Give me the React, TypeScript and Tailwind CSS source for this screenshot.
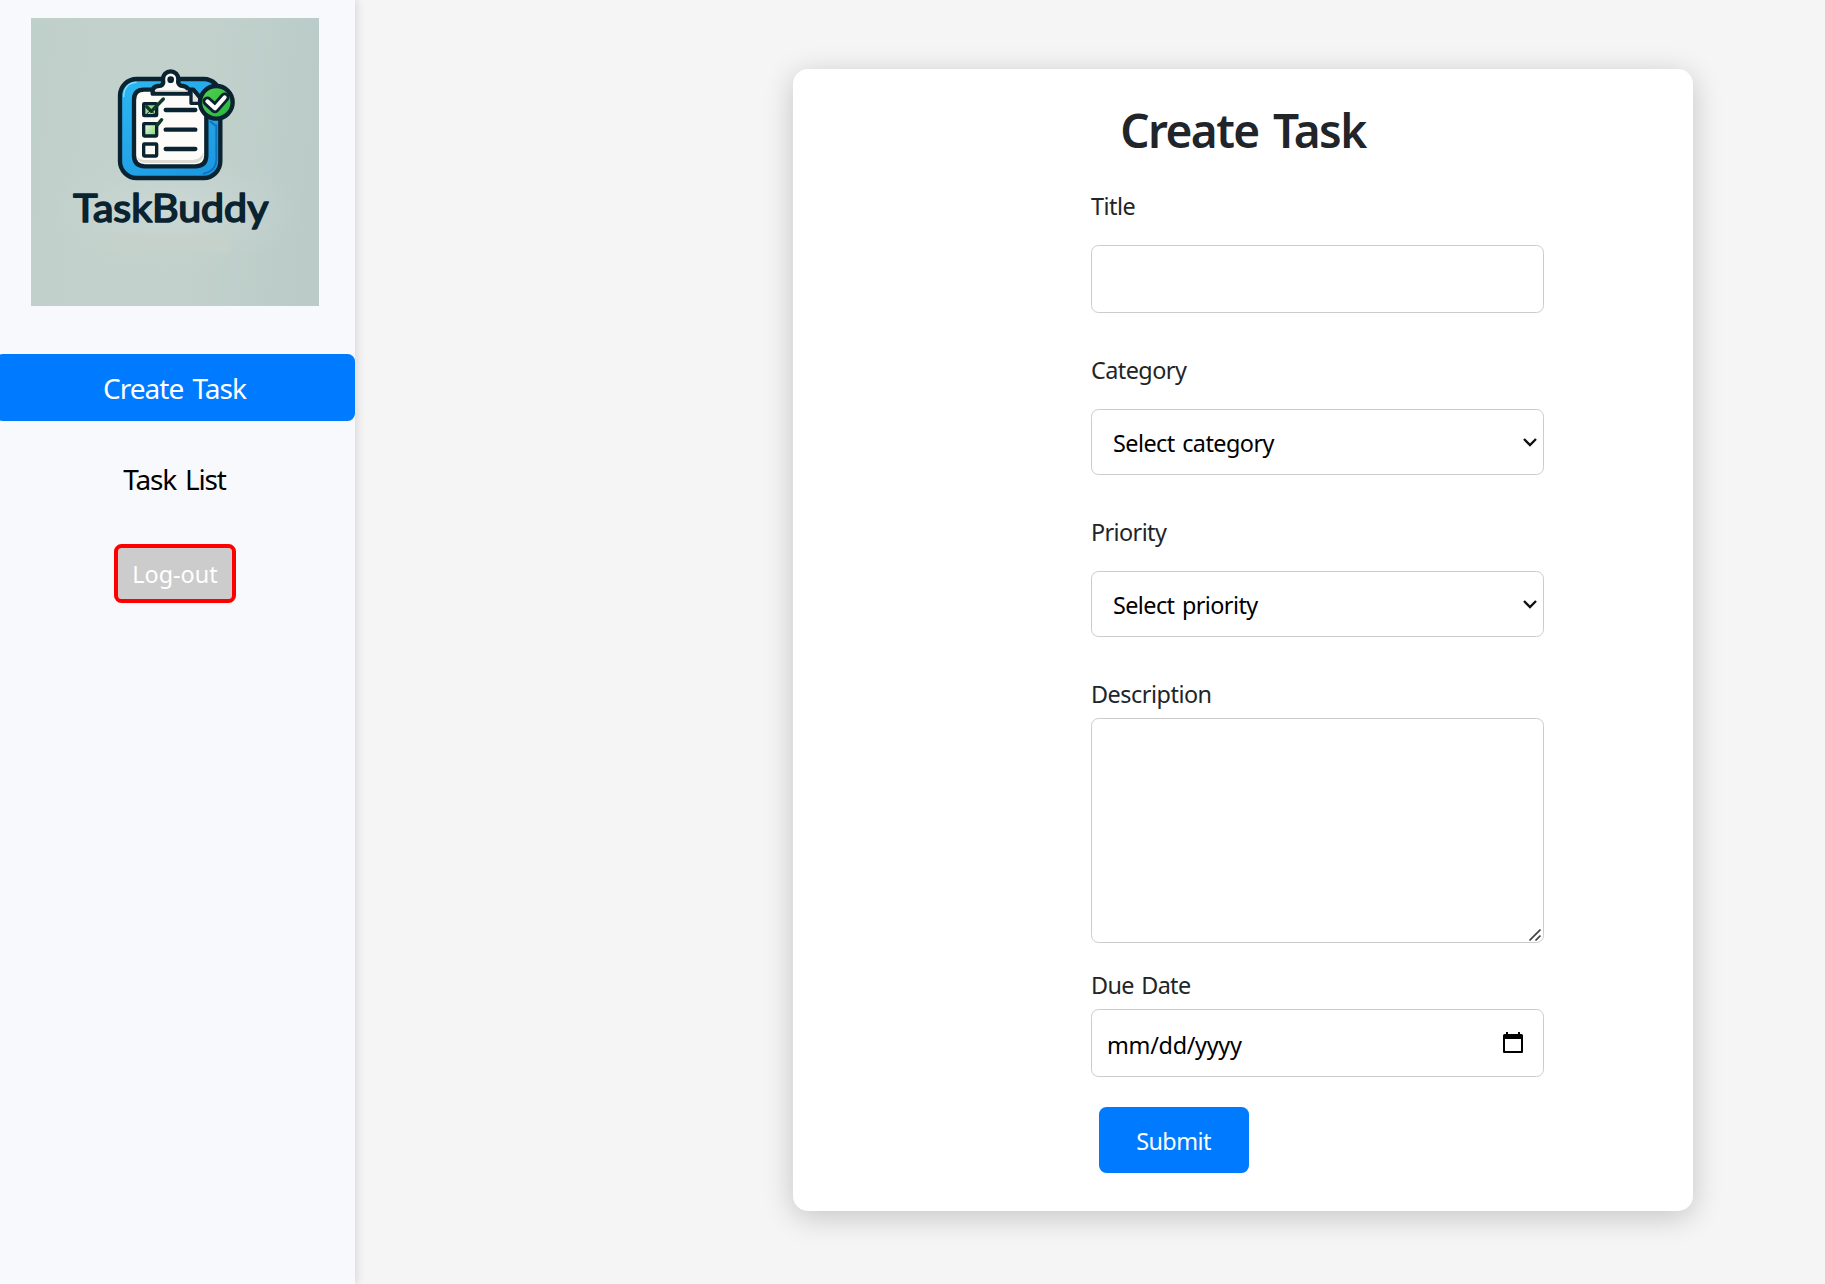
import type { ReactNode } from "react";

const DARK = "#0a2330";

function Logo() {
  return (
    <svg viewBox="93 54 864 864" className="block h-72 w-72" role="img" aria-label="TaskBuddy">
      <defs>
        <linearGradient id="wall" x1="0" y1="0" x2="1" y2="0.1">
          <stop offset="0" stopColor="#bfcfca" />
          <stop offset="0.3" stopColor="#c3d1cc" />
          <stop offset="0.6" stopColor="#c2d1cc" />
          <stop offset="1" stopColor="#bbccc8" />
        </linearGradient>
        <radialGradient id="glow">
          <stop offset="0" stopColor="#cbd8d6" />
          <stop offset="0.5" stopColor="#c8d5d2" stopOpacity="0.6" />
          <stop offset="1" stopColor="#c4d2cd" stopOpacity="0" />
        </radialGradient>
        <linearGradient id="board" x1="0" y1="0" x2="0.6" y2="1">
          <stop offset="0" stopColor="#2cb8f2" />
          <stop offset="1" stopColor="#1f9ae2" />
        </linearGradient>
        <linearGradient id="badge" x1="0" y1="0" x2="1" y2="1">
          <stop offset="0" stopColor="#56d34f" />
          <stop offset="1" stopColor="#22b33c" />
        </linearGradient>
        <linearGradient id="box" x1="0" y1="0" x2="1" y2="1">
          <stop offset="0" stopColor="#f4fbea" />
          <stop offset="1" stopColor="#7bd46c" />
        </linearGradient>
      </defs>
      <rect x="93" y="54" width="864" height="864" fill="url(#wall)" />
      <ellipse cx="515" cy="630" rx="400" ry="180" fill="url(#glow)" />
      <rect x="308" y="698" width="385" height="58" rx="12" fill="#c5d1cb" opacity="0.8" />

      <g stroke={DARK} strokeLinecap="round" strokeLinejoin="round">
        <rect x="360" y="237" width="301" height="297" rx="50" fill="url(#board)" strokeWidth="13" />
        <path d="M632 365Q646 377 649 376V480Q647 514 611 521" fill="none" stroke="#1273bd" strokeWidth="6" />
        <path d="M371 290Q372 250 408 247" fill="none" stroke="#8bdcfb" strokeWidth="4" />
        <path
          d="M432 269H580L619 315V466Q619 499 586 499H435Q402 499 402 466V300Q402 269 432 269Z"
          fill="#fdfcf8"
          strokeWidth="13"
        />
        <path d="M410 470Q416 489 440 489H580Q610 489 611 455Q603 478 578 480H440Q420 480 410 470Z" fill="#dedbd5" stroke="none" />
        <path d="M573 271V310H604" fill="#e5e3de" strokeWidth="10" />
        <path
          d="M458 281V272Q459 260 474 258L483 257Q492 252 489 241A23 23 0 1 1 535 241Q532 252 543 257L550 258Q565 260 570 281Z"
          fill="#fbfaf7"
          strokeWidth="13"
        />
        <path d="M489 241V237A23 23 0 0 1 535 237V241" fill="#fbfaf7" strokeWidth="13" />
        <path d="M468 273H562" fill="none" stroke="#d9d8d4" strokeWidth="4" />
        <circle cx="512" cy="239" r="10" fill={DARK} stroke="none" />

        <rect x="431" y="311" width="39" height="36" rx="2" fill="#9bd77f" strokeWidth="10" />
        <path d="M440 320L454 334L490 297" fill="none" stroke="#0d3b28" strokeWidth="10" />
        <path d="M440 342L452 331L464 342" fill="none" strokeWidth="3" />
        <rect x="431" y="371" width="39" height="37" rx="2" fill="url(#box)" strokeWidth="10" />
        <path d="M471 376L485 359" fill="none" stroke="#0d3b28" strokeWidth="10" />
        <rect x="431" y="432" width="39" height="36" rx="2" fill="#f8f8f5" strokeWidth="10" />
        <path d="M497 330H586M497 389H586M497 447H586" fill="none" strokeWidth="13" />

        <circle cx="649" cy="307" r="49" fill="url(#badge)" strokeWidth="13" />
        <path d="M622 304L645 325L674 292" fill="none" strokeWidth="29" />
        <path d="M622 304L645 325L674 292" fill="none" stroke="#fff" strokeWidth="12" />
      </g>
      <text
        x="220"
        y="667"
        textLength="585"
        lengthAdjust="spacingAndGlyphs"
        fill={DARK}
        stroke={DARK}
        strokeWidth="5"
        strokeLinejoin="round"
        className="font-['Lato',sans-serif] text-[113px] font-normal"
      >
        TaskBuddy
      </text>
    </svg>
  );
}

function Label({ children, className }: { children: ReactNode; className: string }) {
  return <label className={`block h-9 whitespace-nowrap text-[23.4px] leading-9 text-[#212529] ${className}`}>{children}</label>;
}

const FIELD = "block w-full rounded-[7.5px] border border-[#ccc] bg-white text-[23.4px] text-black outline-none";

function SelectField({ text, className }: { text: string; className: string }) {
  return (
    <div className="relative mt-[21px]">
      <select className={`h-[66px] appearance-none pt-1 pr-10 pl-[21px] [word-spacing:2px] ${FIELD} ${className}`}>
        <option>{text}</option>
      </select>
      <svg viewBox="0 0 14 9" className="pointer-events-none absolute top-[29px] right-[7px] h-[9px] w-3.5" fill="none">
        <path d="M1 1L7 7L13 1" stroke="#111" strokeWidth="2.400" />
      </svg>
    </div>
  );
}

export default function App() {
  return (
    <div className="flex h-[1284px] w-full overflow-hidden bg-[#f5f5f5] font-['Noto_Sans',sans-serif]">
      <aside className="w-[355px] shrink-0 bg-[#f8f9fc] pt-[18px] shadow-[3px_0_7.5px_rgba(0,0,0,0.1)]">
        <div className="flex w-[350px] flex-col items-center">
          <Logo />
        </div>
        <nav className="mt-12 -ml-[5px] flex w-[360px] flex-col items-center">
          <a className="flex h-[67px] w-full items-center justify-center rounded-[7.5px] bg-[#007bff] pr-px text-[28px] tracking-[-1px] text-white [word-spacing:3px]">
            Create Task
          </a>
          <a className="mt-6 flex h-[67px] items-center pr-px text-[28px] tracking-[-1.2px] text-black [word-spacing:3px]">Task List</a>
          <button className="mt-8 flex h-[59px] w-[122px] items-center justify-center rounded-[7.5px] border-4 border-[#f00] bg-[#ccc] pt-0.5 text-[23.4px] text-white">
            Log-out
          </button>
        </nav>
      </aside>

      <main className="flex flex-1 justify-end pt-[69px] pr-[132px]">
        <section className="h-[1142px] w-[900px] rounded-[15px] bg-white pt-[33px] shadow-[0_6px_30px_rgba(0,0,0,0.2)]">
          <h1 className="h-[58px] text-center text-[46px] leading-[57px] font-semibold tracking-[-1.6px] text-[#212529] [word-spacing:4px]">
            Create Task
          </h1>
          <form className="ml-[298px] w-[453px] pt-7">
            <Label className="tracking-[-0.5px]">Title</Label>
            <input className={`mt-[21px] h-[68px] px-4 ${FIELD}`} />

            <Label className="mt-[39px] tracking-[-0.55px]">Category</Label>
            <SelectField text="Select category" className="tracking-[-0.55px]" />

            <Label className="mt-[39px] tracking-[-0.6px]">Priority</Label>
            <SelectField text="Select priority" className="tracking-[-0.58px]" />

            <Label className="mt-[39px] tracking-[-0.48px]">Description</Label>
            <div className="relative mt-1.5">
              <textarea className={`h-[225px] resize-none px-4 ${FIELD}`} />
              <svg viewBox="0 0 12 12" className="pointer-events-none absolute right-[3px] bottom-[2px] h-3 w-3" fill="none">
                <path d="M0.500 11.500L11.500 0.500M6.500 11.500L11.500 6.500" stroke="#444" strokeWidth="1.700" />
              </svg>
            </div>

            <Label className="mt-[24px] tracking-[-0.65px] [word-spacing:2px]">Due Date</Label>
            <div className="relative mt-1.5">
              <input placeholder="mm/dd/yyyy" className={`h-[68px] px-[15px] pt-[3px] tracking-[-0.3px] placeholder:text-black ${FIELD}`} />
              <svg viewBox="0 0 20 22" className="pointer-events-none absolute top-[23px] right-[21px] h-[22px] w-5">
                <path d="M1 4.500V20H19V4.500Z" fill="none" stroke="#000" strokeWidth="2" strokeLinejoin="round" />
                <path d="M0 3.500Q0 2 1.500 2H3V0H5V2H15V0H17V2H18.500Q20 2 20 3.500V7H0Z" fill="#000" />
              </svg>
            </div>

            <button className="mt-[30px] ml-2 flex h-[66px] w-[150px] items-center justify-center rounded-[7.5px] bg-[#007bff] pt-1 pr-px text-[23.4px] tracking-[-0.55px] text-white">
              Submit
            </button>
          </form>
        </section>
      </main>
    </div>
  );
}
